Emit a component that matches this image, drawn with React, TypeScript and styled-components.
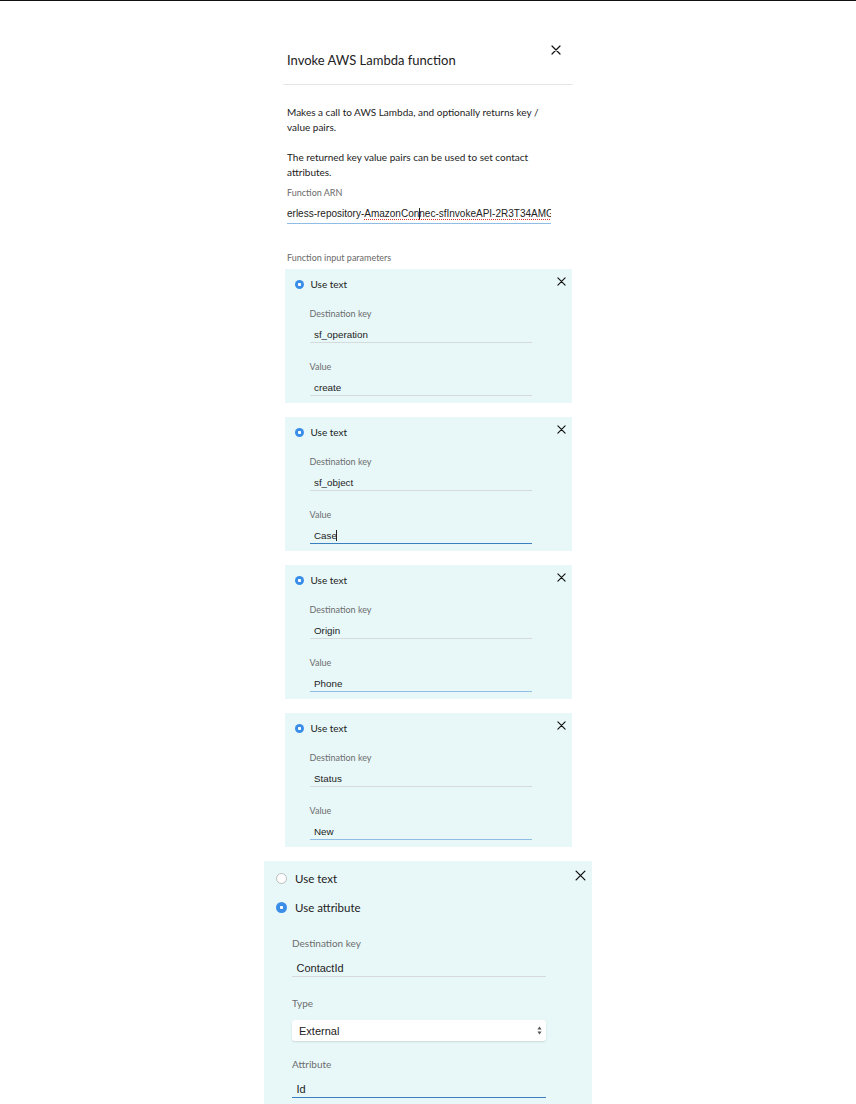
import React from "react";
import styled, { createGlobalStyle, css } from "styled-components";

const GlobalStyle = createGlobalStyle`
  html, body { margin: 0; padding: 0; background: #fff; overflow: hidden; }
  body { font-family: Lato, "Open Sans", Arial, sans-serif; color: #222; }
`;

const TopRule = styled.div`
  height: 1px;
  background: #111;
`;

const Page = styled.main`
  display: flex;
  flex-direction: column;
  align-items: center;
`;

const Panel = styled.section`
  width: 290px;
  padding-top: 44px;
  display: flex;
  flex-direction: column;
`;

const HeaderRow = styled.header`
  display: flex;
  justify-content: space-between;
  align-items: flex-start;
  padding: 0 12px 0 4px;
`;

const Title = styled.h1`
  margin: 6px 0 0;
  font-size: 13px;
  line-height: 18px;
  font-weight: 400;
  color: #222;
`;

const CloseButton = styled.button<{ $size: number; $offset?: number }>`
  border: 0;
  background: none;
  padding: 0;
  margin-top: ${(p) => p.$offset ?? 0}px;
  width: ${(p) => p.$size}px;
  height: ${(p) => p.$size}px;
  display: flex;
  flex: none;
  cursor: pointer;
  color: #111;
  svg { width: 100%; height: 100%; display: block; }
`;

const Divider = styled.hr`
  margin: 15px 0 0;
  border: 0;
  height: 1px;
  background: #e6e6e6;
`;

const Body = styled.div`
  padding: 0 4px;
  display: flex;
  flex-direction: column;
`;

const Description = styled.p`
  margin: 15px 0 0;
  max-width: 270px;
  font-size: 10px;
  line-height: 15px;
  color: #222;
  &:first-child { margin-top: 19.5px; }
`;

const SmallLabel = styled.div<{ $top: number }>`
  margin-top: ${(p) => p.$top}px;
  font-size: 9px;
  line-height: 12px;
  color: #6a6a6a;
`;

const ArnInput = styled.div`
  margin-top: 6px;
  width: 264px;
  height: 19px;
  box-sizing: border-box;
  border-bottom: 1px solid #8ebde6;
  font-family: "Liberation Sans", Arial, sans-serif;
  font-size: 10px;
  line-height: 18px;
  white-space: nowrap;
  overflow: hidden;
  color: #222;
`;

const SpellError = styled.span`
  text-decoration: underline dotted #e0302c;
  text-decoration-thickness: 1px;
  text-underline-offset: 2px;
`;

const Caret = styled.span`
  display: inline-block;
  width: 1px;
  height: 11px;
  margin: 0 -0.5px;
  vertical-align: -2px;
  background: #222;
`;

const CardList = styled.div`
  margin-top: 5px;
  display: flex;
  flex-direction: column;
  align-items: center;
  gap: 14px;
`;

const Card = styled.div<{ $large?: boolean }>`
  box-sizing: border-box;
  background: #e8f8f9;
  display: flex;
  flex-direction: column;
  ${(p) =>
    p.$large
      ? css`
          width: 328px;
          padding: 11px 6.5px 7px 12px;
          --radio: 11px;
          --radio-gap: 8px;
          --opt-fs: 11.5px;
          --opt-h: 13px;
          --opt-gap: 16px;
          --label-fs: 10px;
          --label-h: 13px;
          --value-fs: 11px;
          --input-h: 17px;
          --field-w: 254px;
          --field-indent: 16px;
          --fields-top: 22.5px;
          --label-gap: 10px;
          --field-gap: 20.5px;
        `
      : css`
          width: 287px;
          padding: 8px 6px 7px 10px;
          --radio: 9px;
          --radio-gap: 7px;
          --opt-fs: 10px;
          --opt-h: 14px;
          --opt-gap: 14px;
          --label-fs: 9px;
          --label-h: 12px;
          --value-fs: 9.8px;
          --input-h: 16px;
          --field-w: 222px;
          --field-indent: 15px;
          --fields-top: 17px;
          --label-gap: 7px;
          --field-gap: 18px;
        `}
`;

const CardHead = styled.div`
  display: flex;
  justify-content: space-between;
  align-items: flex-start;
`;

const OptionList = styled.div`
  display: flex;
  flex-direction: column;
  gap: var(--opt-gap);
`;

const Option = styled.label`
  display: flex;
  align-items: center;
  gap: var(--radio-gap);
  font-size: var(--opt-fs);
  line-height: var(--opt-h);
  color: #222;
`;

const Radio = styled.span<{ $checked?: boolean }>`
  width: var(--radio);
  height: var(--radio);
  border-radius: 50%;
  box-sizing: border-box;
  flex: none;
  ${(p) =>
    p.$checked
      ? css`
          background: radial-gradient(circle, #fff 0 1.3px, #3a8ee8 1.9px);
        `
      : css`
          background: #fff;
          border: 1px solid #bdbdbd;
        `}
`;

const Fields = styled.div`
  display: flex;
  flex-direction: column;
  gap: var(--field-gap);
  margin: var(--fields-top) 0 0 var(--field-indent);
  width: var(--field-w);
`;

const Field = styled.div`
  display: flex;
  flex-direction: column;
  gap: var(--label-gap);
`;

const SelectField = styled(Field)`
  margin-bottom: -3.5px;
`;

const Label = styled.span`
  font-size: var(--label-fs);
  line-height: var(--label-h);
  color: #6d6d6d;
`;

type LineState = "idle" | "hover" | "focus";
const lineColor: Record<LineState, string> = {
  idle: "#d6dadc",
  hover: "#8fbde6",
  focus: "#3a7fbf",
};

const TextValue = styled.div<{ $state: LineState }>`
  height: var(--input-h);
  box-sizing: border-box;
  border-bottom: 1px solid ${(p) => lineColor[p.$state]};
  font-family: "Liberation Sans", Arial, sans-serif;
  font-size: var(--value-fs);
  line-height: calc(var(--input-h) - 1px);
  padding-left: 4.5px;
  color: #222;
  white-space: nowrap;
  overflow: hidden;
`;

const Select = styled.div`
  height: 21px;
  box-sizing: border-box;
  background: #fff;
  border-radius: 3px;
  box-shadow: 0 1px 2px rgba(0, 0, 0, 0.13);
  display: flex;
  align-items: center;
  justify-content: space-between;
  padding: 0 4px 0 7px;
  font-family: "Liberation Sans", Arial, sans-serif;
  font-size: 11px;
  color: #222;
`;

const CloseIcon = ({ w = 1.2 }: { w?: number }) => (
  <svg viewBox="0 0 10 10">
    <path d="M1 1L9 9M9 1L1 9" stroke="currentColor" strokeWidth={w} strokeLinecap="round" fill="none" />
  </svg>
);

const SelectArrows = () => (
  <svg width="5" height="9" viewBox="0 0 5 9">
    <path d="M2.5 0.6L4.6 3.6H0.4Z M2.5 8.4L0.4 5.4H4.6Z" fill="#555" />
  </svg>
);

type Param = { key: string; value: string; state: LineState; caret?: boolean };

const params: Param[] = [
  { key: "sf_operation", value: "create", state: "idle" },
  { key: "sf_object", value: "Case", state: "focus", caret: true },
  { key: "Origin", value: "Phone", state: "hover" },
  { key: "Status", value: "New", state: "hover" },
];

const TextParamCard = ({ p }: { p: Param }) => (
  <Card>
    <CardHead>
      <OptionList>
        <Option>
          <Radio $checked />
          Use text
        </Option>
      </OptionList>
      <CloseButton $size={9} aria-label="Remove">
        <CloseIcon w={1.3} />
      </CloseButton>
    </CardHead>
    <Fields>
      <Field>
        <Label>Destination key</Label>
        <TextValue $state="idle">{p.key}</TextValue>
      </Field>
      <Field>
        <Label>Value</Label>
        <TextValue $state={p.state}>
          {p.value}
          {p.caret && <Caret />}
        </TextValue>
      </Field>
    </Fields>
  </Card>
);

const AttributeParamCard = () => (
  <Card $large>
    <CardHead>
      <OptionList>
        <Option>
          <Radio />
          Use text
        </Option>
        <Option>
          <Radio $checked />
          Use attribute
        </Option>
      </OptionList>
      <CloseButton $size={11} $offset={-2.5} aria-label="Remove">
        <CloseIcon w={1.2} />
      </CloseButton>
    </CardHead>
    <Fields>
      <Field>
        <Label>Destination key</Label>
        <TextValue $state="idle">ContactId</TextValue>
      </Field>
      <SelectField>
        <Label>Type</Label>
        <Select>
          External
          <SelectArrows />
        </Select>
      </SelectField>
      <Field>
        <Label>Attribute</Label>
        <TextValue $state="focus">Id</TextValue>
      </Field>
    </Fields>
  </Card>
);

export default function App() {
  return (
    <>
      <GlobalStyle />
      <TopRule />
      <Page>
        <Panel>
          <HeaderRow>
            <Title>Invoke AWS Lambda function</Title>
            <CloseButton $size={10} aria-label="Close">
              <CloseIcon w={1.2} />
            </CloseButton>
          </HeaderRow>
          <Divider />
          <Body>
            <Description>Makes a call to AWS Lambda, and optionally returns key / value pairs.</Description>
            <Description>The returned key value pairs can be used to set contact attributes.</Description>
            <SmallLabel $top={7.5}>Function ARN</SmallLabel>
            <ArnInput>
              erless-repository-
              <SpellError>
                AmazonCon
                <Caret />
                nec-sfInvokeAPI-2R3T34AMG
              </SpellError>
            </ArnInput>
            <SmallLabel $top={28}>Function input parameters</SmallLabel>
          </Body>
        </Panel>
        <CardList>
          {params.map((p) => (
            <TextParamCard key={p.key} p={p} />
          ))}
          <AttributeParamCard />
        </CardList>
      </Page>
    </>
  );
}
